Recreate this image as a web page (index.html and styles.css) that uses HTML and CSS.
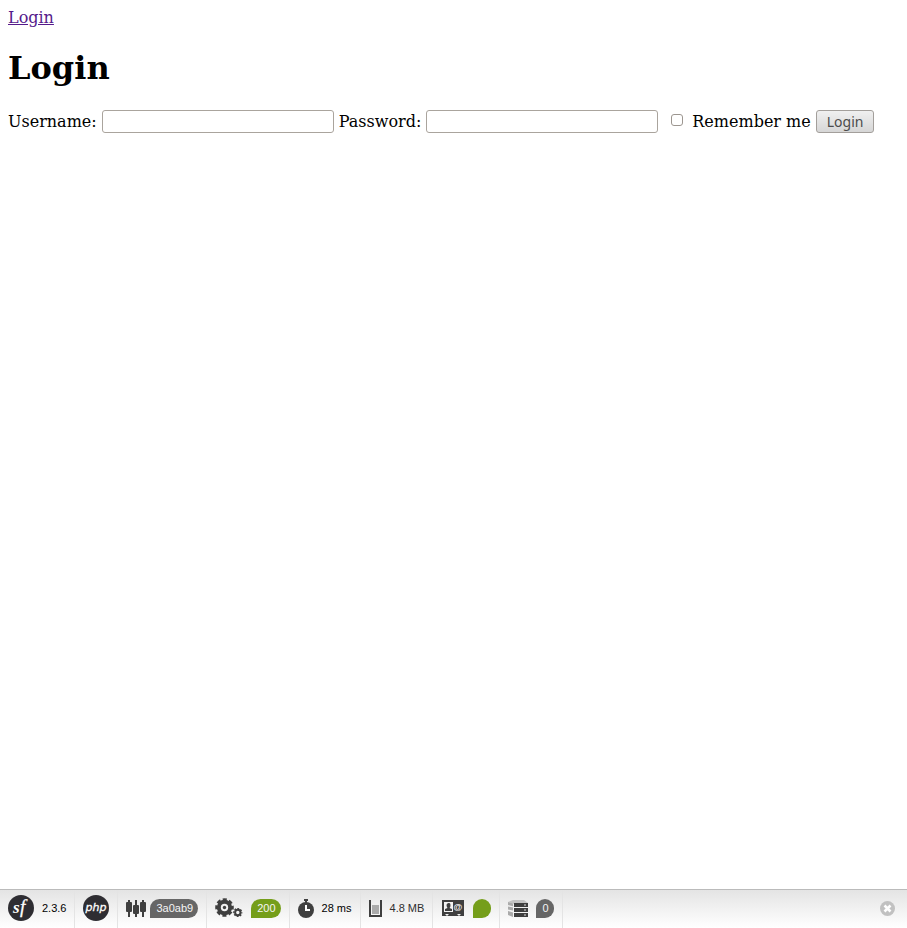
FILE: index.html
```html
<!DOCTYPE html>
<html lang="en">
<head>
<meta charset="utf-8">
<title>Login</title>
<link rel="stylesheet" href="styles.css">
</head>
<body>
<main class="page">
  <nav><a class="nav-link" href="#">Login</a></nav>
  <h1>Login</h1>
  <form class="login-form">
    <label for="username">Username:</label>
    <input class="field" type="text" id="username">
    <label for="password">Password:</label>
    <input class="field" type="password" id="password">
    <input class="check" type="checkbox" id="remember">
    <label for="remember">Remember me</label>
    <button class="submit" type="submit">Login</button>
  </form>
</main>
<footer class="toolbar">
  <div class="block">
    <svg width="26" height="26" viewBox="0 0 26 26" aria-hidden="true"><circle cx="13" cy="13" r="13" fill="#2e2d32"/><text class="logo-s" x="5" y="18">s</text><text class="logo-f" x="12" y="18">f</text></svg>
    <span class="version">2.3.6</span>
  </div>
  <div class="block">
    <svg width="26" height="26" viewBox="0 0 26 26" aria-hidden="true"><circle cx="13" cy="13" r="13" fill="#2e2d32"/><text class="logo-php" x="13" y="16" text-anchor="middle">php</text></svg>
  </div>
  <div class="block tight">
    <svg width="20" height="20" viewBox="0 0 20 20" fill="#3f3f3f" aria-hidden="true"><path d="M2 2h2v17H2zM9 2h2v17H9zM16 2h2v17h-2z"/><rect y="4" width="6" height="10" rx="1"/><rect x="7" y="7" width="6" height="9" rx="1"/><rect x="14" y="4" width="6" height="10" rx="1"/></svg>
    <span class="pill">3a0ab9</span>
  </div>
  <div class="block">
    <svg width="28" height="20" viewBox="0 0 28 20" aria-hidden="true">
      <g fill="none" stroke="#3f3f3f">
        <circle cx="9.500" cy="9.500" r="5.700" stroke-width="4"/>
        <circle cx="9.500" cy="9.500" r="8" stroke-width="2.600" stroke-dasharray="4 2.283" stroke-dashoffset="2"/>
        <circle cx="22.800" cy="14.500" r="2.700" stroke-width="2"/>
        <circle cx="22.800" cy="14.500" r="4" stroke-width="1.200" stroke-dasharray="1.900 1.240" stroke-dashoffset=".95"/>
      </g>
      <circle cx="9.500" cy="9.500" r="1.700" fill="#3f3f3f"/>
    </svg>
    <span class="pill green">200</span>
  </div>
  <div class="block">
    <svg width="16" height="20" viewBox="0 0 16 20" aria-hidden="true"><path fill="#3f3f3f" d="M6 1h4v2H6zM7 2h2v3H7z"/><circle cx="8" cy="12" r="8" fill="#3f3f3f"/><path d="M8 7v5h4" fill="none" stroke="#fff" stroke-width="2"/></svg>
    <span class="timing">28 ms</span>
  </div>
  <div class="block">
    <svg width="13" height="18" viewBox="0 0 13 18" aria-hidden="true"><path d="M1 1v16h11V1" fill="none" stroke="#3f3f3f" stroke-width="2"/><path fill="#aaa" d="M3 6h7v9H3z"/></svg>
    <span class="memory">4.8 MB</span>
  </div>
  <div class="block wide">
    <svg width="22" height="18" viewBox="0 0 22 18" aria-hidden="true"><path fill="#3f3f3f" d="M0 1h22v16H0z"/><path fill="#f3f3f3" d="M2 3h9v10H2zM3 15h4l-2 2zM15 15h4l-2 2z"/><path fill="#3f3f3f" d="M3 12v-2l2.500-1Q4.500 7.500 4.500 6T6.500 4t2 2-1 3L10 10v2z"/><text class="at" x="16" y="11" text-anchor="middle">@</text></svg>
    <span class="pill green dot"></span>
  </div>
  <div class="block">
    <svg width="20" height="18" viewBox="0 0 20 18" aria-hidden="true"><path fill="#c3c3c3" d="M0 3 5 1h11l4 3v1H6z"/><path fill="#aaa" d="M0 3l5 1.500v2.800L0 6zM0 7.500l5 1v3l-5-1zM0 12l5 1.500V18l-5-2z"/><path fill="#3f3f3f" d="M6 4h14v4H6zM6 9h14v4H6zM6 14h14v4H6z"/><path fill="#ddd" d="M16 5.500h2v1h-2zM16 10.500h2v1h-2zM16 15.500h2v1h-2z"/></svg>
    <span class="pill">0</span>
  </div>
  <button class="close" type="button" aria-label="Close toolbar"><svg width="15" height="15" viewBox="0 0 15 15" aria-hidden="true"><circle cx="7.500" cy="7.500" r="7.500" fill="#c1c1c1"/><path d="m4.500 4.500 6 6m0-6-6 6" stroke="#fff" stroke-width="2.600"/></svg></button>
</footer>
</body>
</html>
```
FILE: styles.css
```css
body {
  margin: 0;
  min-height: 100vh;
  display: flex;
  flex-direction: column;
  background: #fff;
  color: #000;
  font: 16px/19px "DejaVu Serif", serif;
}

.page {
  flex: 1;
  padding: 8px;
}

.nav-link {
  color: #551a8b;
}

h1 {
  margin: 22px 0 23px;
  font-size: 32px;
  line-height: 38px;
}

.login-form {
  display: flex;
  flex-wrap: wrap;
  align-items: center;
  column-gap: 5px;
}

.field {
  box-sizing: border-box;
  width: 232px;
  height: 23px;
  padding: 2px 4px;
  border: 1px solid #aaa49d;
  border-radius: 3px;
  background: #fff;
}

.check {
  appearance: none;
  box-sizing: border-box;
  width: 12px;
  height: 12px;
  margin: 0 4px 3px 8px;
  border: 1px solid #9c9690;
  border-radius: 3px;
  background: #fff;
}

.check:checked {
  background: #555;
}

.submit {
  height: 23px;
  padding: 0 10px;
  border: 1px solid #a39f9b;
  border-radius: 3px;
  background: linear-gradient(#f0f0f0, #d6d6d6);
  color: #4c4c4c;
  font: 14px/20px "Noto Sans", sans-serif;
}

.toolbar {
  display: flex;
  height: 38px;
  border-top: 1px solid #bbb;
  background: linear-gradient(#e4e4e4, #fff);
  font: 11px/18px "Liberation Sans", Arial, sans-serif;
}

.block {
  display: flex;
  align-items: center;
  gap: 8px;
  padding: 0 8px 2px;
  border-right: 1px solid #e4e4e4;
  white-space: nowrap;
}

.block svg {
  flex: none;
}

.tight {
  gap: 4px;
}

.wide {
  gap: 9px;
  padding-left: 9px;
}

.memory {
  color: #2f2f2f;
}

.pill {
  height: 19px;
  padding: 0 5px 0 6px;
  border-radius: 10px 10px 10px 0;
  background: #666;
  color: #f5f5f5;
}

.green {
  background: #759e1a;
}

.dot {
  min-width: 7px;
}

.logo-s {
  fill: #fff;
  font: italic bold 17px "Liberation Serif", serif;
}

.logo-f {
  fill: #fff;
  stroke: #fff;
  stroke-width: 0.3px;
  font: italic 19px "Liberation Serif", serif;
}

.logo-php {
  fill: #fff;
  stroke: #fff;
  stroke-width: 0.3px;
  font: italic 11px "DejaVu Sans", sans-serif;
}

.at {
  fill: #f3f3f3;
  font: bold 9px "Liberation Sans", sans-serif;
}

.close {
  margin: 0 12px 0 auto;
  padding: 0 0 2px;
  border: 0;
  background: none;
  display: flex;
  align-items: center;
}
```
